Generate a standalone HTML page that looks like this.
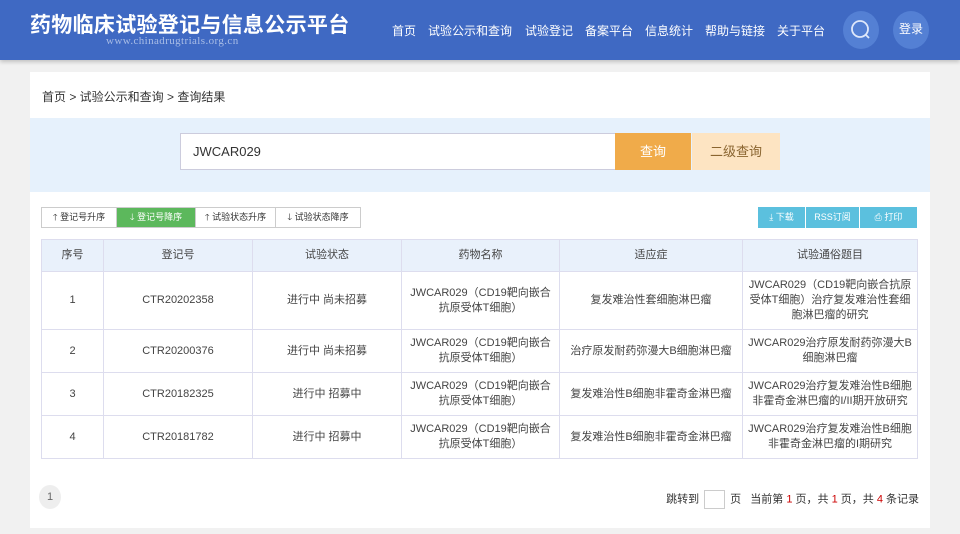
<!DOCTYPE html>
<html><head><meta charset="utf-8">
<style>
*{margin:0;padding:0;box-sizing:border-box}
body{width:960px;height:534px;overflow:hidden;background:#f1f1f1;font-family:"Liberation Sans","Noto Sans CJK SC",sans-serif;color:#333;position:relative}
.hdr{position:absolute;left:0;top:0;width:960px;height:60px;background:#3f69c3;box-shadow:0 2px 4px rgba(0,0,0,.2)}
.logo{position:absolute;left:30px;top:9px;font-size:21px;font-weight:bold;color:#fff;letter-spacing:.3px;white-space:nowrap}
.url{position:absolute;left:106px;top:35px;font-family:"Liberation Serif",serif;font-size:11px;color:#a9bde6;letter-spacing:.4px}
.nav{position:absolute;top:22px;font-size:12px;color:#fff;white-space:nowrap}
.circ{position:absolute;top:11px;width:36px;height:38px;border-radius:50%;background:#5480d4}
.panel{position:absolute;left:30px;top:72px;width:900px;height:456px;background:#fff}
.bc{position:absolute;left:12px;top:16px;font-size:12px;color:#333}
.band{position:absolute;left:0;top:46px;width:900px;height:74px;background:#e6f1fc}
.inp{position:absolute;left:150px;top:15px;width:436px;height:37px;background:#fff;border:1px solid #ccd;font-size:13px;padding:10px 0 0 12px}
.b1{position:absolute;left:585px;top:15px;width:76px;height:37px;background:#f0ab4a;color:#fff;font-size:13px;text-align:center;line-height:37px}
.b2{position:absolute;left:662px;top:15px;width:88px;height:37px;background:#fde4c2;color:#8a6530;font-size:13px;text-align:center;line-height:37px}
.sort{position:absolute;left:11px;top:135px;height:21px;display:flex;border:1px solid #ccc;font-size:9px}
.sort div{line-height:19px;border-right:1px solid #ccc;text-align:center}
.sort .g{background:#5cb85c;color:#fff}
.tools{position:absolute;left:728px;top:135px;height:21px;display:flex;font-size:9px;color:#fff}
.tools div{background:#5bc0de;line-height:21px;text-align:center;margin-right:1px}
table{position:absolute;left:11px;top:167px;border-collapse:collapse;font-size:11px;width:877px}
td,th{border:1px solid #dde;text-align:center;font-weight:normal;color:#444;line-height:15px;padding:0 4px}
th{background:#e9f1fb;height:32px}
tr.r1 td{height:58px}tr.r2 td{height:43px}
.pg{position:absolute;left:9px;top:413px;width:22px;height:24px;border-radius:50%;background:#eee;font-size:11px;text-align:center;line-height:24px;color:#666}
.pinfo{position:absolute;right:11px;top:418px;font-size:11px;color:#333}
.pinfo span.box{display:inline-block;width:21px;height:19px;border:1px solid #ccc;vertical-align:middle;margin:0 5px}
.red{color:#c00}
</style></head><body>
<div class="hdr">
<div class="logo">药物临床试验登记与信息公示平台</div>
<div class="url">www.chinadrugtrials.org.cn</div>
<div class="nav" style="left:392px">首页</div>
<div class="nav" style="left:428px">试验公示和查询</div>
<div class="nav" style="left:525px">试验登记</div>
<div class="nav" style="left:585px">备案平台</div>
<div class="nav" style="left:645px">信息统计</div>
<div class="nav" style="left:705px">帮助与链接</div>
<div class="nav" style="left:777px">关于平台</div>
<div class="circ" style="left:843px"><svg width="36" height="38"><circle cx="17" cy="18" r="8" fill="none" stroke="#dfe8fa" stroke-width="1.8"/><line x1="23" y1="24" x2="26" y2="27" stroke="#dfe8fa" stroke-width="1.8"/></svg></div>
<div class="circ" style="left:893px;font-size:12px;color:#fff;text-align:center;line-height:36px">登录</div>
</div>
<div class="panel">
<div class="bc">首页 &gt; 试验公示和查询 &gt; 查询结果</div>
<div class="band">
<div class="inp">JWCAR029</div>
<div class="b1">查询</div>
<div class="b2">二级查询</div>
</div>
<div class="sort"><div style="width:75px">🡑 登记号升序</div><div class="g" style="width:79px">🡓 登记号降序</div><div style="width:80px">🡑 试验状态升序</div><div style="border:0;width:84px">🡓 试验状态降序</div></div>
<div class="tools"><div style="width:47px">⤓ 下载</div><div style="width:53px">RSS订阅</div><div style="width:57px">⎙ 打印</div></div>
<table>
<tr><th style="width:62px">序号</th><th style="width:149px">登记号</th><th style="width:149px">试验状态</th><th style="width:158px">药物名称</th><th style="width:183px">适应症</th><th>试验通俗题目</th></tr>
<tr class="r1"><td>1</td><td>CTR20202358</td><td>进行中 尚未招募</td><td>JWCAR029（CD19靶向嵌合抗原受体T细胞）</td><td>复发难治性套细胞淋巴瘤</td><td>JWCAR029（CD19靶向嵌合抗原受体T细胞）治疗复发难治性套细胞淋巴瘤的研究</td></tr>
<tr class="r2"><td>2</td><td>CTR20200376</td><td>进行中 尚未招募</td><td>JWCAR029（CD19靶向嵌合抗原受体T细胞）</td><td>治疗原发耐药弥漫大B细胞淋巴瘤</td><td>JWCAR029治疗原发耐药弥漫大B细胞淋巴瘤</td></tr>
<tr class="r2"><td>3</td><td>CTR20182325</td><td>进行中 招募中</td><td>JWCAR029（CD19靶向嵌合抗原受体T细胞）</td><td>复发难治性B细胞非霍奇金淋巴瘤</td><td>JWCAR029治疗复发难治性B细胞非霍奇金淋巴瘤的I/II期开放研究</td></tr>
<tr class="r2"><td>4</td><td>CTR20181782</td><td>进行中 招募中</td><td>JWCAR029（CD19靶向嵌合抗原受体T细胞）</td><td>复发难治性B细胞非霍奇金淋巴瘤</td><td>JWCAR029治疗复发难治性B细胞非霍奇金淋巴瘤的I期研究</td></tr>
</table>
<div class="pg">1</div>
<div class="pinfo">跳转到<span class="box"></span>页 &nbsp; 当前第 <span class="red">1</span> 页，共 <span class="red">1</span> 页，共 <span class="red">4</span> 条记录</div>
</div>
</body></html>
